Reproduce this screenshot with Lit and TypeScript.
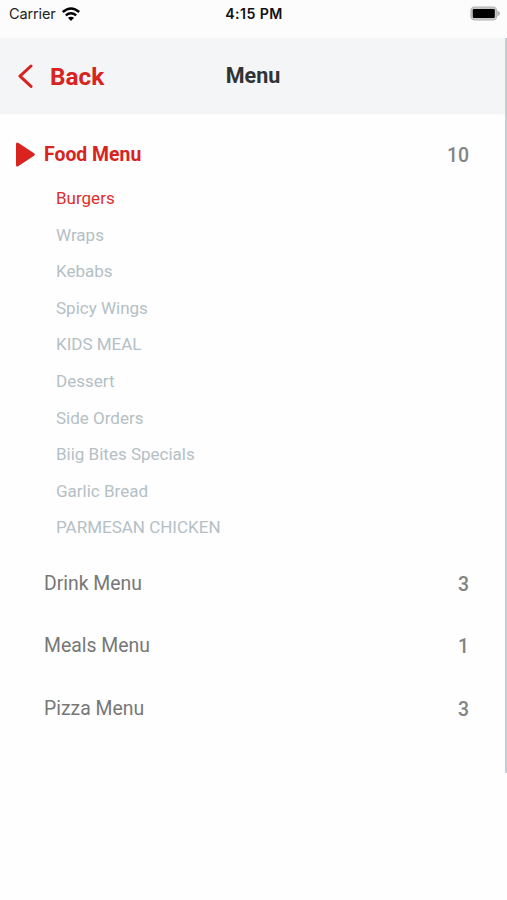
import { LitElement, html, css } from "lit";
import { customElement } from "lit/decorators.js";

const FOOD = [
  "Burgers", "Wraps", "Kebabs", "Spicy Wings", "KIDS MEAL", "Dessert",
  "Side Orders", "Biig Bites Specials", "Garlic Bread", "PARMESAN CHICKEN",
];
const MENUS = [
  { name: "Drink Menu", count: 3 },
  { name: "Meals Menu", count: 1 },
  { name: "Pizza Menu", count: 3 },
];

@customElement("app-root")
export class AppRoot extends LitElement {
  static styles = css`
    :host { display: block; height: 900px; background: #fefefe; font-family: Roboto, sans-serif; overflow: hidden; }
    * { box-sizing: border-box; }
    svg { display: block; flex: none; }
    .status { height: 38px; padding: 0 7px 11px 9px; display: grid; grid-template-columns: 1fr auto 1fr; align-items: center; background: #fcfcfc; font: 15px/18px Inter, sans-serif; color: #222; }
    .carrier { display: flex; align-items: center; gap: 6px; letter-spacing: -0.12px; font-size: 14.5px; }
    .time { font-weight: 600; font-size: 14.2px; letter-spacing: 0.4px; color: #111; margin-right: 1px; }
    .battery { justify-self: end; }
    .panel { height: 735px; border-right: 2px solid #c6ccd5; }
    .header { height: 76px; background: #f3f5f7; display: grid; grid-template-columns: 1fr auto 1fr; align-items: center; padding: 0 0 0 18px; }
    .back { display: flex; align-items: center; gap: 17px; color: #d8231f; font-size: 24.3px; font-weight: 700; }
    .title { font-size: 21.5px; font-weight: 700; color: #303336; margin: 0 17px 2px 0; }
    .row { height: 62.4px; padding: 0 36px 0 44px; display: flex; align-items: center; justify-content: space-between; font-size: 19.4px; color: #777; }
    .count { font-weight: 500; color: #838383; padding-top: 2px; }
    .food { height: 40px; margin-top: 20px; padding-left: 16px; }
    .name { display: flex; align-items: center; gap: 9px; }
    .food .name { color: #d8231f; font-weight: 700; }
    .subs { list-style: none; margin: 0; padding: 6.1px 0 6.3px 56px; }
    .subs li { height: 36.6px; line-height: 36.6px; font-size: 17px; color: #b4c0c5; }
    .subs li.active { color: #dc2f2c; }
  `;

  render() {
    return html`
      <div class="status">
        <div class="carrier">
          <span>Carrier</span>
          <svg width="18" height="14" viewBox="0 0 18 14" fill="none" stroke="#000" stroke-width="2.5">
            <path d="M0.8 5 Q9 -2 17.2 5" />
            <path d="M3.8 8.4 Q9 4.2 14.2 8.4" />
            <path d="M9 14 L5.9 10.8 Q9 8.6 12.1 10.8 Z" fill="#000" stroke="none" />
          </svg>
        </div>
        <span class="time">4:15 PM</span>
        <svg class="battery" width="30" height="15" viewBox="0 0 30 15">
          <rect x="1" y="1" width="25.6" height="13" rx="3.6" fill="#c8c8c8" stroke="#b4b4b4" stroke-width="1.2" />
          <rect x="2.8" y="3" width="22" height="9" rx="1.2" />
          <path d="M27.4 4.6 Q30 5.8 30 7.5 Q30 9.2 27.4 10.4 Z" fill="#b0b0b0" />
        </svg>
      </div>
      <div class="panel">
        <header class="header">
          <div class="back">
            <svg width="15" height="24" viewBox="0 0 15 24" fill="none" stroke="currentColor" stroke-width="3" stroke-linecap="round" stroke-linejoin="round">
              <path d="M13 2 L2 12.2 L13 22.4" />
            </svg>
            <span>Back</span>
          </div>
          <span class="title">Menu</span>
        </header>
        <div class="row food">
          <span class="name">
            <svg width="19" height="25" viewBox="0 0 19 25" fill="currentColor">
              <path d="M0 2.3 Q0 -0.6 2.5 1 L18 11.3 Q19.6 12.5 18 13.7 L2.5 24 Q0 25.6 0 22.7 Z" />
            </svg>
            <span>Food Menu</span>
          </span>
          <span class="count">10</span>
        </div>
        <ul class="subs">
          ${FOOD.map((f, i) => html`<li class=${i === 0 ? "active" : ""}>${f}</li>`)}
        </ul>
        ${MENUS.map((m) => html`
          <div class="row"><span class="name">${m.name}</span><span class="count">${m.count}</span></div>
        `)}
      </div>
    `;
  }
}
